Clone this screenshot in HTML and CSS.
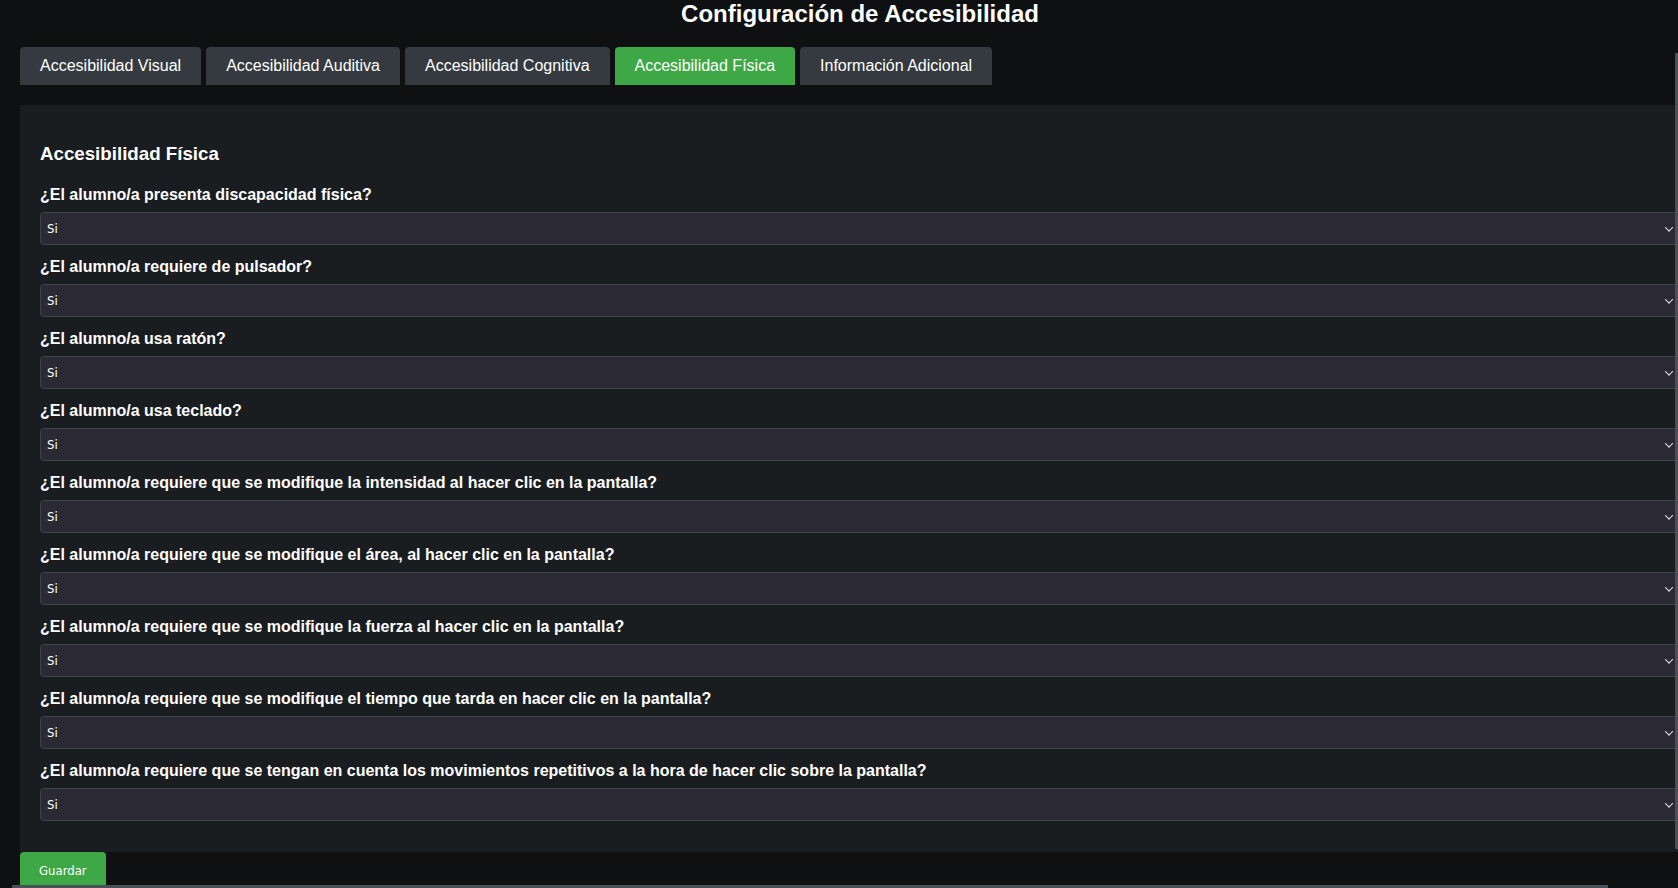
FILE: index.html
```html
<!DOCTYPE html>
<html lang="es">
<head>
<meta charset="utf-8">
<title>Configuración de Accesibilidad</title>
<link rel="stylesheet" href="styles.css">
</head>
<body>
<div class="page">
  <h1 class="title">Configuración de Accesibilidad</h1>
  <div class="tabs">
    <button class="tab">Accesibilidad Visual</button>
    <button class="tab">Accesibilidad Auditiva</button>
    <button class="tab">Accesibilidad Cognitiva</button>
    <button class="tab active">Accesibilidad Física</button>
    <button class="tab">Información Adicional</button>
  </div>
  <section class="panel">
    <h3 class="panel-title">Accesibilidad Física</h3>
    <label class="label">¿El alumno/a presenta discapacidad física?</label>
    <div class="select-wrap"><select class="select"><option>Si</option><option>No</option></select></div>
    <label class="label">¿El alumno/a requiere de pulsador?</label>
    <div class="select-wrap"><select class="select"><option>Si</option><option>No</option></select></div>
    <label class="label">¿El alumno/a usa ratón?</label>
    <div class="select-wrap"><select class="select"><option>Si</option><option>No</option></select></div>
    <label class="label">¿El alumno/a usa teclado?</label>
    <div class="select-wrap"><select class="select"><option>Si</option><option>No</option></select></div>
    <label class="label">¿El alumno/a requiere que se modifique la intensidad al hacer clic en la pantalla?</label>
    <div class="select-wrap"><select class="select"><option>Si</option><option>No</option></select></div>
    <label class="label">¿El alumno/a requiere que se modifique el área, al hacer clic en la pantalla?</label>
    <div class="select-wrap"><select class="select"><option>Si</option><option>No</option></select></div>
    <label class="label">¿El alumno/a requiere que se modifique la fuerza al hacer clic en la pantalla?</label>
    <div class="select-wrap"><select class="select"><option>Si</option><option>No</option></select></div>
    <label class="label">¿El alumno/a requiere que se modifique el tiempo que tarda en hacer clic en la pantalla?</label>
    <div class="select-wrap"><select class="select"><option>Si</option><option>No</option></select></div>
    <label class="label">¿El alumno/a requiere que se tengan en cuenta los movimientos repetitivos a la hora de hacer clic sobre la pantalla?</label>
    <div class="select-wrap"><select class="select"><option>Si</option><option>No</option></select></div>
  </section>
  <button class="save">Guardar</button>
</div>
<div class="scroll-v"></div>
<div class="scroll-h"></div>
</body>
</html>
```
FILE: styles.css
```css
html, body {
  margin: 0;
  padding: 0;
  overflow: hidden;
  background: #0e1012;
  height: 100%;
}

body {
  font-family: "Liberation Sans", Arial, sans-serif;
  color: #ffffff;
}

.page {
  width: 1680px;
  padding-left: 20px;
}

.title {
  margin: 0;
  font-size: 24px;
  line-height: 28px;
  font-weight: bold;
  text-align: center;
}

.tabs {
  display: flex;
  gap: 5px;
  margin-top: 19px;
}

.tab {
  height: 38px;
  padding: 0 20px;
  border: none;
  border-radius: 4px 4px 0 0;
  background: #343a40;
  color: #ffffff;
  font-family: "Liberation Sans", Arial, sans-serif;
  font-size: 16px;
  line-height: 38px;
  cursor: pointer;
}

.tab.active {
  background: #3ea846;
}

.panel {
  margin-top: 20px;
  background: #1a1d1f;
  padding: 20px 20px 18px 20px;
}

.panel-title {
  margin: 18px 0 21px 0;
  font-size: 18.72px;
  line-height: 22px;
  font-weight: bold;
}

.label {
  display: block;
  font-size: 16px;
  line-height: 18px;
  font-weight: bold;
  margin-bottom: 8px;
}

.select-wrap {
  position: relative;
  margin-bottom: 13px;
}

.select-wrap::after {
  content: "";
  position: absolute;
  right: 8px;
  top: 50%;
  width: 5px;
  height: 5px;
  border-right: 1.6px solid #e6e6e6;
  border-bottom: 1.6px solid #e6e6e6;
  transform: translateY(-75%) rotate(45deg);
  pointer-events: none;
}

.select {
  display: block;
  width: 100%;
  height: 33px;
  box-sizing: border-box;
  appearance: none;
  -webkit-appearance: none;
  background: #2b2a34;
  border: 1px solid #3e4448;
  border-radius: 4px;
  color: #ffffff;
  padding: 0 6px;
  font-family: "DejaVu Sans Condensed", "DejaVu Sans", sans-serif;
  font-size: 13px;
}

.save {
  display: block;
  height: 44px;
  padding: 0 19px 8px 19px;
  border: none;
  border-radius: 4px 4px 0 0;
  background: #3ea846;
  color: #ffffff;
  font-family: "DejaVu Sans Condensed", "DejaVu Sans", sans-serif;
  font-size: 13px;
  cursor: pointer;
}

.scroll-v {
  position: fixed;
  right: 0;
  top: 53px;
  width: 3px;
  height: 796px;
  background: #4a5055;
}

.scroll-h {
  position: fixed;
  left: 12px;
  bottom: 0;
  width: 1596px;
  height: 3px;
  background: #4a5055;
}
```
